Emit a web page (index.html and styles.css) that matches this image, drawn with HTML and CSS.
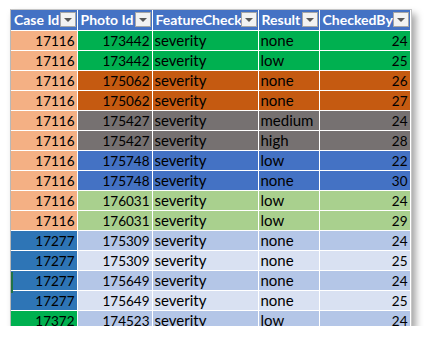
FILE: index.html
```html
<!DOCTYPE html>
<html lang="en">
<head>
  <meta charset="UTF-8" />
  <title>Feature Check Table</title>
  <link rel="stylesheet" href="styles.css">
</head>
<body>
  <div class="sheet">
    <span class="row-mark"></span>
    <table class="grid">
      <colgroup>
        <col class="c-case"><col class="c-photo"><col class="c-feature"><col class="c-result"><col class="c-by">
      </colgroup>
      <thead>
        <tr>
          <th><span>Case Id</span><i class="drop"></i></th>
          <th><span>Photo Id</span><i class="drop"></i></th>
          <th><span>FeatureCheck</span><i class="drop"></i></th>
          <th><span>Result</span><i class="drop"></i></th>
          <th><span>CheckedBy</span><i class="drop"></i></th>
        </tr>
      </thead>
      <tbody>
        <tr class="green"><td class="peach num">17116</td><td class="num">173442</td><td>severity</td><td>none</td><td class="num">24</td></tr>
        <tr class="green"><td class="peach num">17116</td><td class="num">173442</td><td>severity</td><td>low</td><td class="num">25</td></tr>
        <tr class="rust"><td class="peach num">17116</td><td class="num">175062</td><td>severity</td><td>none</td><td class="num">26</td></tr>
        <tr class="rust"><td class="peach num">17116</td><td class="num">175062</td><td>severity</td><td>none</td><td class="num">27</td></tr>
        <tr class="stone"><td class="peach num">17116</td><td class="num">175427</td><td>severity</td><td>medium</td><td class="num">24</td></tr>
        <tr class="stone"><td class="peach num">17116</td><td class="num">175427</td><td>severity</td><td>high</td><td class="num">28</td></tr>
        <tr class="blue"><td class="peach num">17116</td><td class="num">175748</td><td>severity</td><td>low</td><td class="num">22</td></tr>
        <tr class="blue"><td class="peach num">17116</td><td class="num">175748</td><td>severity</td><td>none</td><td class="num">30</td></tr>
        <tr class="lime"><td class="peach num">17116</td><td class="num">176031</td><td>severity</td><td>low</td><td class="num">24</td></tr>
        <tr class="lime"><td class="peach num">17116</td><td class="num">176031</td><td>severity</td><td>low</td><td class="num">29</td></tr>
        <tr class="band-a"><td class="ocean num">17277</td><td class="num">175309</td><td>severity</td><td>none</td><td class="num">24</td></tr>
        <tr class="band-b"><td class="ocean num">17277</td><td class="num">175309</td><td>severity</td><td>none</td><td class="num">25</td></tr>
        <tr class="band-a"><td class="ocean num">17277</td><td class="num">175649</td><td>severity</td><td>none</td><td class="num">24</td></tr>
        <tr class="band-b"><td class="ocean num">17277</td><td class="num">175649</td><td>severity</td><td>none</td><td class="num">25</td></tr>
        <tr class="band-a"><td class="grass num">17372</td><td class="num">174523</td><td>severity</td><td>low</td><td class="num">24</td></tr>
      </tbody>
    </table>
  </div>
</body>
</html>
```

FILE: styles.css
```css
body {
  margin: 0;
  padding: 9px 0 0 10px;
  background: #ffffff;
  font-family: 'Lato', 'Liberation Sans', sans-serif;
}

.sheet {
  position: relative;
  width: 400px;
  height: 316px;
  overflow: hidden;
  border-top: 1px solid #c6c6c6;
  border-left: 1px solid #b8b8b8;
  border-right: 1px solid #c6c6c6;
  background: #ffffff;
  box-shadow: 4px 5px 7px rgba(0, 0, 0, 0.35);
}

.row-mark {
  position: absolute;
  left: 0;
  top: 262px;
  width: 2px;
  height: 21px;
  background: #217346;
  z-index: 2;
}

.grid {
  border-collapse: collapse;
  table-layout: fixed;
  width: 399px;
  font-size: 15px;
  color: #000000;
}

.c-case { width: 66px; }
.c-photo { width: 75px; }
.c-feature { width: 106px; }
.c-result { width: 61px; }
.c-by { width: 91px; }

th, td {
  border: 1px solid #ffffff;
  padding: 0 2px 1px;
  height: 18px;
  line-height: 18px;
  white-space: nowrap;
  overflow: hidden;
  text-align: left;
}

tr:first-child th { border-top: none; }
th:first-child, td:first-child { border-left: none; }

th {
  height: 20px;
  line-height: 20px;
  padding: 0 2px 0 3px;
  background: #4472c4;
  color: #ffffff;
  font-size: 14px;
  font-weight: bold;
  position: relative;
}

.drop {
  position: absolute;
  right: 1px;
  top: 2px;
  width: 14px;
  height: 13px;
  background: #f2f2f2;
  border: 1px solid #a6a6a6;
}

.drop::after {
  content: "";
  position: absolute;
  left: 3px;
  top: 5px;
  border-left: 4px solid transparent;
  border-right: 4px solid transparent;
  border-top: 4px solid #595959;
}

.num {
  font-size: 13.5px;
  padding: 1px 2px 0;
  text-align: right;
}

.green td { background: #00b050; }
.rust td { background: #c55a11; }
.stone td { background: #767171; }
.blue td { background: #4472c4; }
.lime td { background: #a9d08e; }
.band-a td { background: #b4c6e7; }
.band-b td { background: #d9e1f2; }

tr td.peach { background: #f4b084; }
tr td.ocean { background: #2e75b6; }
tr td.grass { background: #00b050; }
```
